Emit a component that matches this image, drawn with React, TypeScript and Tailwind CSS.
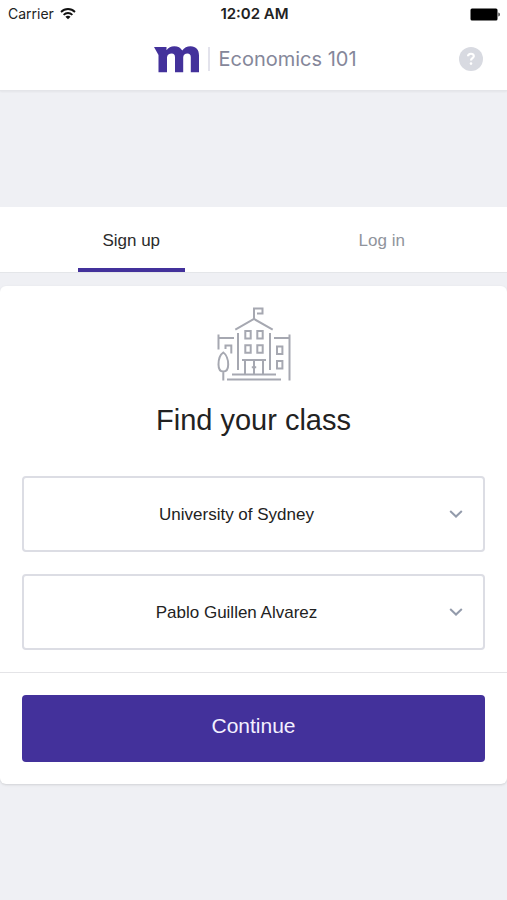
import { useState } from 'react'

const tabs = ['Sign up', 'Log in'] as const
type Tab = (typeof tabs)[number]

const universities = ['University of Sydney', 'University of Melbourne']
const teachers = ['Pablo Guillen Alvarez', 'Stephen Cheung']

function WifiIcon() {
  return (
    <svg viewBox="0 0 16 12" className="h-3 w-4" fill="none" stroke="#111" strokeWidth="1.8">
      <path d="M1 4C5 0 11 0 15 4" />
      <path d="M3.6 6.8C6.1 4.4 9.9 4.4 12.4 6.8" />
      <path d="M8 11.2 5.4 8.8C7 7.5 9 7.5 10.6 8.8Z" fill="#111" stroke="none" />
    </svg>
  )
}

function BatteryIcon() {
  return (
    <svg viewBox="0 0 31 13" className="h-[13px] w-[31px]">
      <rect x="0.5" y="0.5" width="27" height="12" rx="1.5" />
      <path d="M28.5 4.5c1.6.4 1.6 3.6 0 4z" />
    </svg>
  )
}

function Logo() {
  return (
    <svg viewBox="0 0 46 27" className="h-[27px] w-[46px]" fill="#43319b" role="img" aria-label="Logo">
      <path d="M0 1H12.5V4.2C14.3 1.6 17 .2 20.3 .2C24 .2 26.7 1.7 28.2 4.5C30.2 1.7 33 .2 36.6 .2C42 .2 45 3.7 45 9.4V26.3H36.8V11.2C36.8 8.8 35.6 7.5 33.5 7.5C31 7.5 29.2 9 29.2 11.4V26.3H21V11.2C21 8.8 19.9 7.5 17.8 7.5C15.2 7.5 13 9 13 11.4V26.3H4.5V9Z" />
    </svg>
  )
}

function SchoolIcon() {
  return (
    <svg
      viewBox="0 0 76 76"
      className="h-[76px] w-[76px]"
      fill="none"
      stroke="#a6a8b1"
      strokeWidth="2"
    >
      {/* flag and roof */}
      <path d="M38 13V2.5H46.5V7.5H41" />
      <path d="M19.3 23.7 38 13 56.7 23.7" />
      {/* walls */}
      <path d="M22 27V64M54 27V64" />
      <path d="M2.5 28.5V43.5M2.5 32H18M58 32H73.5M73.5 28.5V74.5" />
      {/* windows */}
      <path d="M29.3 25h5.4v7.5h-5.4zM41.3 25h5.4v7.5h-5.4z" />
      <path d="M29.3 39.3h5.4v7.5h-5.4zM41.3 39.3h5.4v7.5h-5.4z" />
      <path d="M61 40.5h5.4v7.5h-5.4zM61 55h5.4v7.5h-5.4z" />
      {/* door and steps */}
      <path d="M26 54H50M29 54V68M47 54V68M38 54V68M35.8 61.3H40.2" />
      <path d="M16 68.4H60M11 73.4H65" />
      {/* tree and lamp */}
      <path d="M7.3 46.5C4.2 48.5 2.5 54 2.5 58.5C2.5 63 4.5 65.5 7.3 65.5C10.2 65.5 12.2 63 12.2 58.5C12.2 54 10.4 48.5 7.3 46.5ZM7.3 65.5V74.5" />
      <path d="M9.5 43V39.5H15.3V47.5" />
    </svg>
  )
}

function HelpIcon() {
  return (
    <svg viewBox="0 0 24 24" className="h-6 w-6" fill="none">
      <circle cx="12" cy="12" r="12" fill="#d8dae1" />
      <path d="M9 9.3C9.2 5.8 15 6 14.8 9.3C14.7 11.2 12 11.3 12 13.6" stroke="#fff" strokeWidth="2.2" />
      <circle cx="12" cy="16.6" r="1.3" fill="#fff" />
    </svg>
  )
}

interface PickerProps {
  label: string
  options: string[]
}

function Picker({ label, options }: PickerProps) {
  return (
    <div className="relative">
      <select
        aria-label={label}
        className="h-[76px] w-full appearance-none rounded border-2 border-[#dcdde4] bg-white pt-0.5 pr-[34px] text-center text-[17px] text-[#222] [text-align-last:center]"
      >
        {options.map((option) => (
          <option key={option}>{option}</option>
        ))}
      </select>
      <svg
        viewBox="0 0 14 8"
        className="pointer-events-none absolute top-[34px] right-[22px] h-2 w-3.5"
        fill="none"
        stroke="#939bab"
        strokeWidth="2"
      >
        <path d="M1.2 1 7 6.5 12.8 1" />
      </svg>
    </div>
  )
}

export default function App() {
  const [activeTab, setActiveTab] = useState<Tab>('Sign up')

  return (
    <div className="min-h-screen bg-[#eff0f4] font-['Liberation_Sans',sans-serif] text-[#222]">
      <header className="border-b border-[#e4e5e9] bg-white shadow-xs">
        {/* Status bar */}
        <div className="grid h-7 grid-cols-[1fr_auto_1fr] items-center pr-1.5 pl-2 font-['Inter',sans-serif] text-sm">
          <div className="flex items-center gap-1.5">
            <span>Carrier</span>
            <WifiIcon />
          </div>
          <span className="text-[15px] font-semibold">12:02 AM</span>
          <div className="flex justify-end">
            <BatteryIcon />
          </div>
        </div>

        {/* Course title */}
        <div className="grid h-[62px] grid-cols-[1fr_auto_1fr] items-center pr-6 pl-7">
          <div className="col-start-2 flex items-center gap-2">
            <Logo />
            <h1 className="border-l-2 border-[#e3e3ec] pl-2 font-['Inter',sans-serif] text-[20px] leading-6 text-[#85879a]">
              Economics 101
            </h1>
          </div>
          <button aria-label="Help" className="justify-self-end">
            <HelpIcon />
          </button>
        </div>
      </header>

      <nav className="mt-[116px] grid grid-cols-2 border-b border-[#e4e6e9] bg-white pl-1.5">
        {tabs.map((tab) => (
          <button
            key={tab}
            onClick={() => setActiveTab(tab)}
            className={`h-[65px] w-[107px] justify-self-center border-b-4 pt-1.5 text-[17px] ${
              activeTab === tab
                ? 'border-[#43319b] text-[#2b2b2b]'
                : 'border-transparent text-[#90949c]'
            }`}
          >
            {tab}
          </button>
        ))}
      </nav>

      <main className="mt-[13px] rounded-md bg-white shadow-sm">
        <div className="flex flex-col items-center px-[22px] pt-5 pb-[22px]">
          <SchoolIcon />
          <h2 className="mt-5 text-[29px] leading-9">Find your class</h2>
          <div className="mt-[38px] flex w-full flex-col gap-[22px]">
            <Picker label="School" options={universities} />
            <Picker label="Teacher" options={teachers} />
          </div>
        </div>
        <div className="border-t border-[#e4e4e7] p-[22px]">
          <button className="h-[67px] w-full rounded bg-[#43319b] pb-1.5 text-[21px] text-[#f3f0ff]">
            Continue
          </button>
        </div>
      </main>
    </div>
  )
}
